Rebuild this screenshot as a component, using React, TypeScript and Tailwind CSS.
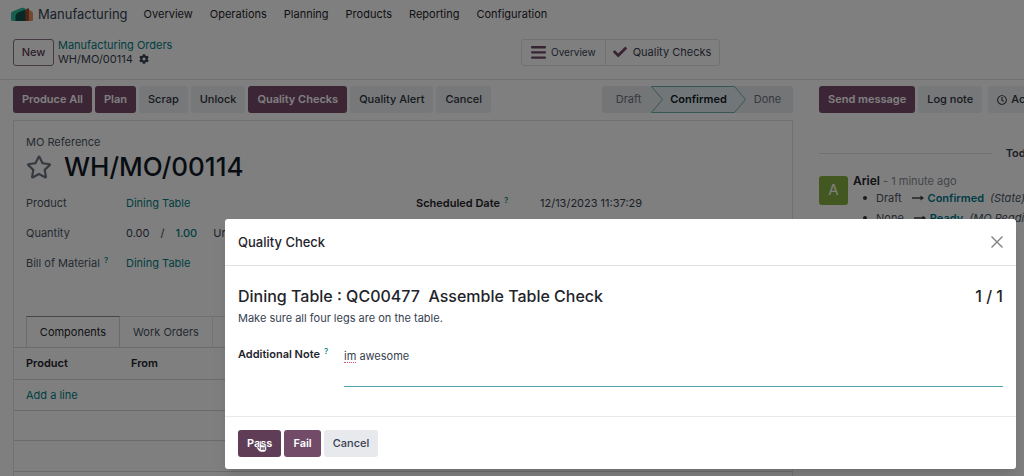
import React from "react";
import { FaCheck, FaCog, FaRegClock, FaRegStar } from "react-icons/fa";
import { FaHandPointer } from "react-icons/fa6";

const primary =
  "h-[27px] shrink-0 rounded-[3px] bg-[#784c6c] px-[9px] text-[11px] font-semibold text-white";
const secondary =
  "h-[27px] shrink-0 rounded-[3px] bg-[#edf0f3] px-[9px] text-[11px] font-medium text-[#2f343c]";

function Logo() {
  return (
    <svg viewBox="0 0 22 15" className="h-[15px] w-[22px]" aria-hidden="true">
      <path d="M0 6.500Q0 5.200 1.500 4.500L10 1Q11.500.4 12.500.8L15 2v12H1.500Q0 14 0 12.500Z" fill="#2fbf9c" />
      <path d="M4.500 14V9Q4.500 6.500 7 5.500L12.500 3.200Q15 2.500 15 5v9Z" fill="#10534c" />
      <path d="M14.500 14V3.500Q14.500 2.500 15.500 2L17 1.300Q18 1 18 2v12Z" fill="#a8492f" />
      <path d="M18 4q0-1.300 1.200-.7L21 4.500Q22 5.200 22 6.500v6Q22 14 20.500 14H18Z" fill="#e59260" />
    </svg>
  );
}

function Help() {
  return <sup className="ml-1 text-[8px] font-medium text-[#017e84]">?</sup>;
}

function Arrow() {
  return (
    <svg viewBox="0 0 12 8" className="ml-[10px] mr-1 h-2 w-3" aria-label="to">
      <path d="M0 4h10" stroke="#343a40" strokeWidth="1.400" />
      <path d="M8.500 1.500 12 4 8.500 6.500Z" fill="#343a40" />
    </svg>
  );
}

function Nav() {
  return (
    <nav className="flex h-[29px] items-center pl-[11px] text-[11px] text-[#1f242b]">
      <Logo />
      <a href="#home" className="ml-[5px] text-[13px] text-[#374151]">Manufacturing</a>
      <div className="ml-4 flex gap-[17px]">
        {["Overview", "Operations", "Planning", "Products", "Reporting", "Configuration"].map((t) => (
          <a href={"#" + t} key={t}>{t}</a>
        ))}
      </div>
    </nav>
  );
}

function ControlPanel() {
  return (
    <div className="flex h-[51px] items-center border-b border-[#e2e3e6] pb-1 pl-[13px]">
      <button className="h-[27px] w-[41px] rounded-[3px] border border-[#8f7089] text-[11px] font-medium text-[#5d3d56]">New</button>
      <div className="ml-1 w-28 text-[11px] leading-[14px]">
        <a href="#orders" className="block whitespace-nowrap text-[#017e84]">Manufacturing Orders</a>
        <div className="flex items-center gap-[6px] text-[#374151]">
          WH/MO/00114
          <button aria-label="Actions"><FaCog className="size-[10px]" /></button>
        </div>
      </div>
      <div className="ml-[351px] flex h-[27px] rounded-[3px] border border-[#e2e3e6] text-[#374151]">
        <button className="flex items-center gap-[5px] border-r border-[#e2e3e6] px-[9px] text-[10px]">
          <svg viewBox="0 0 15 13" className="h-[13px] w-[15px]" fill="#714b67" aria-hidden="true">
            <rect width="15" height="2.400" rx="1" />
            <rect y="5.200" width="15" height="2.400" rx="1" />
            <rect y="10.400" width="15" height="2.400" rx="1" />
          </svg>
          Overview
        </button>
        <button className="flex items-center gap-[6px] pl-[7px] pr-2 text-[11px]">
          <FaCheck className="size-[14px] text-[#714b67]" />
          Quality Checks
        </button>
      </div>
    </div>
  );
}

function StatusBar() {
  return (
    <div className="ml-auto flex h-[27px] rounded-[3px] bg-[#e7eaed] text-[11px] text-[#6b7280]">
      <button className="w-[49px] pl-1">Draft</button>
      <button className="relative w-[95px] font-semibold text-[#111827]">
        <svg viewBox="0 0 95 27" className="absolute inset-0 size-full" preserveAspectRatio="none" aria-hidden="true">
          <path d="M.5.5h83L94.500 13.500 83.500 26.500H.5L11.500 13.500Z" fill="#e2eff1" stroke="#6fada9" />
        </svg>
        <span className="relative">Confirmed</span>
      </button>
      <button className="w-[47px] pr-1">Done</button>
    </div>
  );
}

function Sheet() {
  return (
    <section className="mt-[7px] grow border border-[#e2e3e6] text-[11px] text-[#4b5563]">
      <div className="px-3 pt-[14px]">
        <p className="leading-[14px]">MO Reference</p>
        <div className="flex h-9 items-center gap-3">
          <button aria-label="Priority"><FaRegStar className="size-[26px] text-[#6b7280]" /></button>
          <h1 className="text-[26px] font-medium leading-9 text-[#111827]">WH/MO/00114</h1>
        </div>
        <dl className="mt-[3px] grid grid-cols-[100px_290px_124px_1fr] items-center whitespace-nowrap [grid-auto-rows:30px]">
          <dt>Product</dt>
          <dd><a href="#product" className="text-[#017e84]">Dining Table</a></dd>
          <dt className="font-semibold text-[#1f242b]">Scheduled Date<Help /></dt>
          <dd className="text-[#374151]">12/13/2023 11:37:29</dd>
          <dt>Quantity</dt>
          <dd className="col-span-3 flex text-[#374151]">
            0.00<span className="mx-[11px]">/</span>
            <span className="mr-4 font-medium text-[#017e84]">1.00</span>Units
          </dd>
          <dt>Bill of Material<Help /></dt>
          <dd><a href="#bom" className="text-[#017e84]">Dining Table</a></dd>
        </dl>
      </div>
      <div className="mt-[38px] flex h-[31px] pl-3" role="tablist">
        <button role="tab" aria-selected="true" className="w-[94px] border-x border-t border-[#d4d6da] border-t-[#8a8d92] text-[#1f242b]">Components</button>
        <button role="tab" className="w-[93px] border-r border-t border-[#e2e3e6]">Work Orders</button>
        <button role="tab" className="w-[93px] border-r border-t border-[#e2e3e6]">By-Products</button>
      </div>
      <table className="w-full border-y border-[#d4d6da] text-left">
        <thead>
          <tr className="h-8 border-b border-[#d4d6da] text-[#1f242b]">
            <th className="w-[117px] pl-3 font-semibold">Product</th>
            <th className="font-semibold">From</th>
          </tr>
        </thead>
        <tbody>
          <tr className="h-[31px] border-b border-[#d4d6da]">
            <td colSpan={2} className="pl-3"><a href="#add" className="text-[#017e84]">Add a line</a></td>
          </tr>
          <tr className="h-[30px] border-b border-[#d4d6da]"><td colSpan={2} /></tr>
          <tr className="h-[31px]"><td colSpan={2} /></tr>
        </tbody>
      </table>
    </section>
  );
}

function Chatter() {
  return (
    <aside className="w-[217px] shrink-0 overflow-hidden pl-3 pt-[6px] text-[11px] text-[#4b5563]">
      <div className="w-[406px]">
        <div className="flex gap-[3px]">
          <button className={primary}>Send message</button>
          <button className={secondary}>Log note</button>
          <button className={secondary + " ml-[3px] flex items-center gap-1"}><FaRegClock className="size-[10px]" />Activities</button>
        </div>
        <div className="mt-[33px] flex items-center gap-[14px] font-semibold leading-[14px] text-[#374151]">
          <hr className="grow border-[#e2e3e6]" />Today<hr className="grow border-[#e2e3e6]" />
        </div>
        <article className="mt-[14px] flex gap-[5px]">
          <div className="mt-[2px] grid size-[29px] place-items-center rounded-[3px] bg-[#86b040] text-[15px] text-white">A</div>
          <div>
            <p className="leading-[14px] text-[#858b94]"><b className="text-[12px] font-semibold text-[#1f242b]">Ariel</b> - 1 minute ago</p>
            <ul className="leading-[20px] [&>li]:flex [&>li]:items-center">
              <li><span className="ml-[10px] mr-[9px] size-1 rounded-full bg-[#343a40]" />Draft<Arrow /><b className="font-semibold text-[#01798f]">Confirmed</b><i className="ml-[6px]">(State)</i></li>
              <li><span className="ml-[10px] mr-[9px] size-1 rounded-full bg-[#343a40]" />None<Arrow /><b className="font-semibold text-[#01798f]">Ready</b><i className="ml-[6px]">(MO Readiness)</i></li>
            </ul>
          </div>
        </article>
      </div>
    </aside>
  );
}

function QualityDialog() {
  return (
    <div role="dialog" aria-modal="true" aria-labelledby="dialog-title" className="w-full self-start rounded-[3px] bg-white text-[11px] text-[#374151] shadow-lg">
      <header className="flex h-[47px] items-center justify-between border-b border-[#dee2e6] px-[13px]">
        <h2 id="dialog-title" className="pt-px text-[13px] font-medium text-[#1f242b]">Quality Check</h2>
        <button aria-label="Close">
          <svg viewBox="0 0 12 12" className="size-3" stroke="#808080" strokeWidth="1.400"><path d="m.5.5 11 11M11.500.5l-11 11" /></svg>
        </button>
      </header>
      <div className="h-[151px] border-b border-[#e7e9ed] px-[13px] pt-[19px]">
        <div className="flex justify-between whitespace-pre text-[16px] font-medium leading-[22px] text-[#1f242b]">
          <h3>{"Dining Table : QC00477  Assemble Table Check"}</h3>
          <span>1 / 1</span>
        </div>
        <p className="mt-[3px] leading-[16px]">Make sure all four legs are on the table.</p>
        <div className="mt-5 flex">
          <label htmlFor="note" className="w-[106px] shrink-0 font-semibold leading-4 text-[#1f242b]">Additional Note<Help /></label>
          <div className="relative grow">
            <textarea id="note" defaultValue="im awesome" spellCheck={false} className="block h-[41px] w-full resize-none border-b border-[#4fa3ab] pt-[2px] leading-[16px] outline-none" />
            <span className="absolute left-0 top-4 w-3 border-b border-dotted border-[#e0526a]" />
          </div>
        </div>
      </div>
      <footer className="flex h-[52px] items-center gap-[3px] px-[13px]">
        <button className="relative h-[27px] rounded-[3px] bg-[#5f3d57] px-[9px] font-semibold text-white">
          Pass
          <FaHandPointer className="absolute left-[18px] top-[11px] size-[11px] text-white" stroke="#6d5a69" strokeWidth="24" />
        </button>
        <button className="h-[27px] rounded-[3px] bg-[#714b67] px-[9px] font-semibold text-white">Fail</button>
        <button className="h-[27px] rounded-[3px] bg-[#e7e9ed] px-[9px] font-medium text-[#374151]">Cancel</button>
      </footer>
    </div>
  );
}

export default function App() {
  return (
    <div className="relative h-screen overflow-hidden bg-white font-['Inter','Liberation_Sans',sans-serif]">
      <Nav />
      <ControlPanel />
      <main className="flex h-full">
        <div className="flex min-w-0 grow flex-col pl-[13px] pr-[14px] pt-[6px]">
          <div className="flex gap-[3px]">
            <button className={primary}>Produce All</button>
            <button className={primary}>Plan</button>
            <button className={secondary}>Scrap</button>
            <button className={secondary}>Unlock</button>
            <button className={primary}>Quality Checks</button>
            <button className={secondary}>Quality Alert</button>
            <button className={secondary}>Cancel</button>
            <StatusBar />
          </div>
          <Sheet />
        </div>
        <Chatter />
      </main>
      <div className="absolute inset-0 flex bg-black/50 pl-[225px] pr-2 pt-[219px]">
        <QualityDialog />
      </div>
    </div>
  );
}
